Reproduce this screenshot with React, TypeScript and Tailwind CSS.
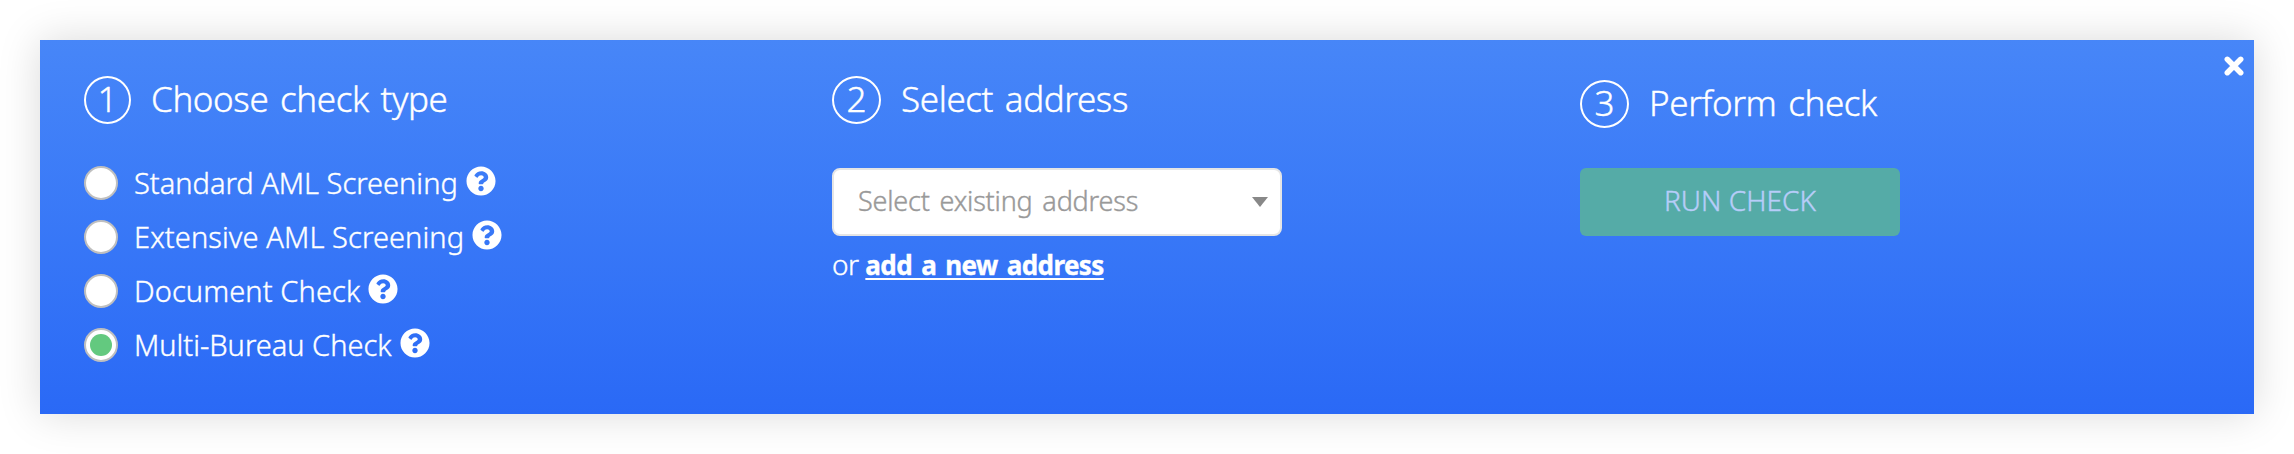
import { clsx } from 'clsx'
import { FaQuestionCircle } from 'react-icons/fa'

interface CheckType {
  id: string
  label: string
  tracking: string
}

const checkTypes: CheckType[] = [
  { id: 'standard', label: 'Standard AML Screening', tracking: 'tracking-[0px]' },
  { id: 'extensive', label: 'Extensive AML Screening', tracking: 'tracking-[0.1px]' },
  { id: 'document', label: 'Document Check', tracking: 'tracking-[0.1px]' },
  { id: 'multi-bureau', label: 'Multi-Bureau Check', tracking: 'tracking-[0px]' },
]

interface StepTitleProps {
  step: number
  title: string
  circleClassName?: string
}

function StepTitle({ step, title, circleClassName }: StepTitleProps) {
  return (
    <div className="flex h-12 items-center whitespace-nowrap text-[35px] leading-none">
      <span
        className={clsx(
          'flex h-12 shrink-0 items-center justify-center rounded-[50%] border-2 border-white pb-[3px]',
          circleClassName
        )}
      >
        {step}
      </span>
      <h2 className="mb-[3px] ml-5 tracking-[-0.4px] [word-spacing:3px]">{title}</h2>
    </div>
  )
}

function CheckOption({ option, checked }: { option: CheckType; checked: boolean }) {
  return (
    <li className="flex h-[34px] items-center whitespace-nowrap">
      <span className="flex size-[34px] shrink-0 items-center justify-center rounded-full border-2 border-[#bfbfbf] bg-white">
        {checked && <span className="size-[22px] rounded-full bg-[#63c97f]" />}
      </span>
      <span className={clsx('mb-0.5 ml-4 text-[29px] leading-none', option.tracking)}>{option.label}</span>
      <FaQuestionCircle className="mb-1 ml-2 size-[30px] shrink-0" />
    </li>
  )
}

export default function App() {
  return (
    <div className="h-[454px] overflow-hidden bg-white p-10 font-['Noto_Sans',sans-serif] font-light text-white [-webkit-text-stroke:0.4px]">
      <section className="flex h-[374px] bg-linear-to-b from-[#4786f8] to-[#2a69f6] pl-11 shadow-[0_0_40px_rgba(0,0,0,0.15)]">
        <div className="w-[748px] pt-9">
          <StepTitle step={1} title="Choose check type" circleClassName="w-[47px]" />
          <ul className="mt-[42px] flex flex-col gap-5">
            {checkTypes.map((option) => (
              <CheckOption key={option.id} option={option} checked={option.id === 'multi-bureau'} />
            ))}
          </ul>
        </div>

        <div className="w-[748px] pt-9">
          <StepTitle step={2} title="Select address" circleClassName="w-[49px]" />
          <div className="mt-11 flex h-[68px] w-[450px] items-center justify-between rounded-lg border-2 border-[#e5e5e5] bg-white pr-3 pl-6">
            <span className="mb-1 text-[27px] leading-none tracking-[-0.2px] text-[#999999] [word-spacing:3px]">
              Select existing address
            </span>
            <svg viewBox="0 0 16 10" className="h-[10px] w-4 fill-[#888888]">
              <path d="M0 0h16l-8 10z" />
            </svg>
          </div>
          <p className="mt-[11px] text-[28px] leading-[34px] tracking-[-0.5px] whitespace-nowrap">
            or{' '}
            <a
              href="#"
              className="text-[26px] font-bold tracking-[-0.6px] underline decoration-2 underline-offset-3 [word-spacing:3px]"
            >
              add a new address
            </a>
          </p>
        </div>

        <div className="pt-10">
          <StepTitle step={3} title="Perform check" circleClassName="w-[49px]" />
          <button
            type="button"
            disabled
            className="mt-10 flex h-[68px] w-80 items-center justify-center rounded-md bg-[#55aba7] pb-1 text-[28px] leading-none text-[#b7cdf9]"
          >
            RUN CHECK
          </button>
        </div>

        <button type="button" aria-label="Close" className="mt-4 mr-[10px] ml-auto size-5">
          <svg viewBox="0 0 20 20" className="size-5 stroke-white stroke-[5.5]" strokeLinecap="round">
            <path d="M3.3 3.3l13.4 13.4M16.7 3.3L3.3 16.7" />
          </svg>
        </button>
      </section>
    </div>
  )
}
